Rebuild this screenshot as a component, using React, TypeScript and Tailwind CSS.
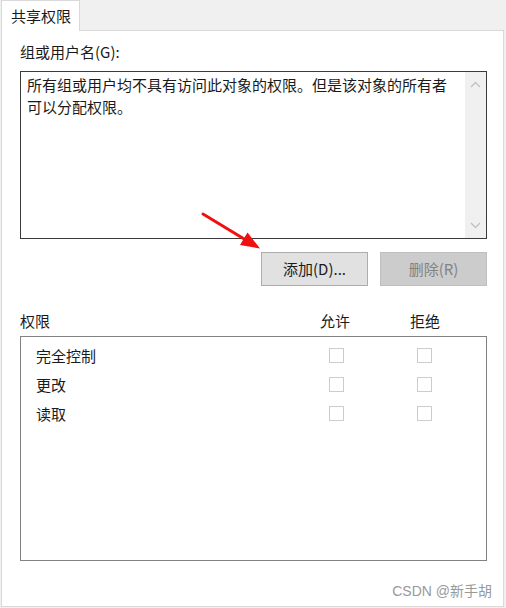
const perms = ["完全控制", "更改", "读取"];

function Checkbox() {
  return <span className="block h-[15px] w-[15px] border border-[#cccccc] bg-white" />;
}

export default function App() {
  return (
    <div className="relative flex h-[608px] w-[506px] flex-col bg-[#f0f0f0] pl-[1px] pr-[2px] pb-[1px] font-['Noto_Sans_CJK_SC',sans-serif] text-[15px] text-[#1a1a1a]">
      {/* tab strip */}
      <div className="flex h-[30px]">
        <div className="relative z-10 -mb-px flex h-[31px] w-[79px] items-center border-l border-r border-t border-[#d9d9d9] bg-white pl-[9px] leading-[20px]">
          共享权限
        </div>
      </div>

      {/* panel */}
      <div className="flex flex-1 flex-col border border-[#d9d9d9] bg-white pl-[18px] pr-[16px] pt-[11px]">
        <div className="h-[20px] leading-[20px]">组或用户名(G):</div>

        <div className="mt-[9px] flex h-[168px] border border-[#3a3a3a] bg-white">
          <div className="flex-1 pl-[6px] pt-[2px] leading-[22px]">
            所有组或用户均不具有访问此对象的权限。但是该对象的所有者
            <br />
            可以分配权限。
          </div>
          <div className="flex w-[21px] flex-col items-center justify-between bg-[#f0f0f0] py-[9px]">
            <svg width="11" height="7" viewBox="0 0 11 7" fill="none" stroke="#c2c2c2" strokeWidth="1.4">
              <path d="M1 6 L5.5 1.5 L10 6" />
            </svg>
            <svg width="11" height="7" viewBox="0 0 11 7" fill="none" stroke="#c2c2c2" strokeWidth="1.4">
              <path d="M1 1 L5.5 5.5 L10 1" />
            </svg>
          </div>
        </div>

        <div className="mt-[13px] flex justify-end gap-[12px]">
          <button className="h-[34px] w-[107px] border border-[#adadad] bg-[#e1e1e1] leading-[20px] text-[#1a1a1a]">
            添加(D)...
          </button>
          <button className="h-[34px] w-[107px] border border-[#bfbfbf] bg-[#cccccc] leading-[20px] text-[#838383]">
            删除(R)
          </button>
        </div>

        <div className="mt-[25px] grid h-[20px] grid-cols-[300px_30px_60px_30px] leading-[20px]">
          <span>权限</span>
          <span>允许</span>
          <span />
          <span>拒绝</span>
        </div>

        <div className="mt-[5px] h-[225px] border border-[#828282] bg-white pl-[15px] pt-[4px]">
          {perms.map((p) => (
            <div key={p} className="grid h-[29px] grid-cols-[293px_15px_73px_15px] items-center leading-[20px]">
              <span>{p}</span>
              <Checkbox />
              <span />
              <Checkbox />
            </div>
          ))}
        </div>
      </div>

      {/* annotation arrow */}
      <svg className="pointer-events-none absolute left-0 top-0" width="506" height="608">
        <line x1="203" y1="214" x2="245" y2="239.5" stroke="#f01010" strokeWidth="3" strokeLinecap="round" />
        <polygon points="260,248.5 240,245 247.5,232.5" fill="#f01010" />
      </svg>

      <div className="absolute right-[14px] top-[581px] font-['Liberation_Sans','Noto_Sans_CJK_SC',sans-serif] text-[14px] leading-[20px] text-[#999999]">
        CSDN @新手胡
      </div>
    </div>
  );
}
